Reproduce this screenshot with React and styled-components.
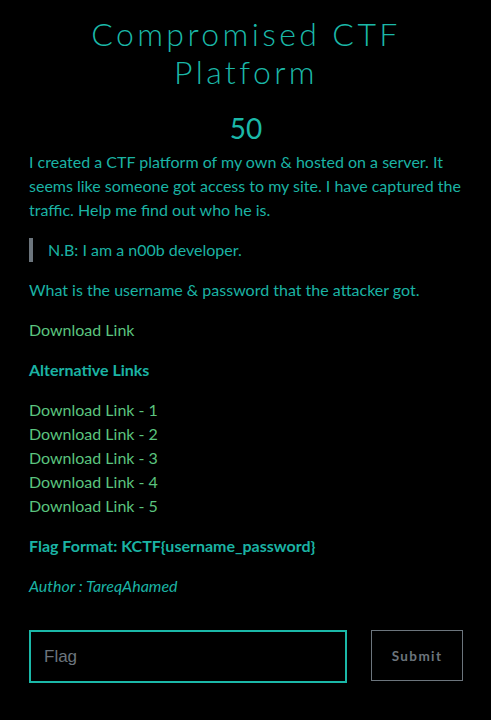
import React from "react";
import styled, { createGlobalStyle } from "styled-components";

const Global = createGlobalStyle`
  html, body { margin: 0; padding: 0; background: #000; }
  body { font-family: Lato, "Open Sans", sans-serif; }
  * { box-sizing: border-box; }
`;

const Page = styled.div`
  background: #000;
  min-height: 720px;
  padding: 15px 28px 20px 29px;
  display: flex;
  flex-direction: column;
`;

const Title = styled.h1`
  margin: 0 auto;
  max-width: 400px;
  text-align: center;
  font-family: Lato, sans-serif;
  font-weight: 300;
  font-size: 32px;
  line-height: 38px;
  letter-spacing: 3.4px;
  color: #1bb8a8;
`;

const Points = styled.h2`
  margin: 20px 0 5px;
  text-align: center;
  font-family: Lato, sans-serif;
  font-weight: 400;
  font-size: 28px;
  line-height: 34px;
  color: #1bb8a8;
`;

const Para = styled.p`
  margin: 0 0 16px;
  font-family: Lato, sans-serif;
  font-size: 16px;
  line-height: 24px;
  color: ${(p) => (p.$green ? "#5bc47e" : "#1bb3a4")};
  font-weight: ${(p) => (p.$bold ? 700 : 400)};
  font-style: ${(p) => (p.$italic ? "italic" : "normal")};
`;

const Quote = styled.blockquote`
  margin: 0 0 16px;
  padding-left: 15px;
  border-left: 4px solid #6c757d;
  font-family: Lato, sans-serif;
  font-size: 16px;
  line-height: 24px;
  color: #1bb3a4;
`;

const LinkList = styled.div`
  display: flex;
  flex-direction: column;
  margin-bottom: 16px;
`;

const DLink = styled.a`
  font-family: Lato, sans-serif;
  font-size: 16px;
  line-height: 24px;
  color: #5bc47e;
  text-decoration: none;
`;

const FormRow = styled.form`
  margin-top: 16px;
  display: flex;
  align-items: flex-start;
  gap: 24px;
`;

const FlagInput = styled.input`
  flex: 1;
  min-width: 0;
  height: 53px;
  background: #000;
  border: 2px solid #1bb8a8;
  padding: 0 13px;
  font-family: "Liberation Sans", Arial, sans-serif;
  font-size: 17px;
  color: #ddd;
  outline: none;
  &::placeholder { color: #6c757d; }
`;

const SubmitBtn = styled.button`
  width: 92px;
  height: 51px;
  background: #000;
  border: 1px solid #6c757d;
  color: #6c757d;
  font-family: Lato, sans-serif;
  font-weight: 700;
  font-size: 13.5px;
  letter-spacing: 1.4px;
  cursor: pointer;
`;

export default function App() {
  return (
    <>
      <Global />
      <Page>
        <Title>Compromised CTF Platform</Title>
        <Points>50</Points>
        <Para>
          I created a CTF platform of my own &amp; hosted on a server. It seems like
          someone got access to my site. I have captured the traffic. Help me find out
          who he is.
        </Para>
        <Quote>N.B: I am a n00b developer.</Quote>
        <Para>What is the username &amp; password that the attacker got.</Para>
        <Para $green>Download Link</Para>
        <Para $bold>Alternative Links</Para>
        <LinkList>
          {[1, 2, 3, 4, 5].map((n) => (
            <DLink key={n} href="#">Download Link - {n}</DLink>
          ))}
        </LinkList>
        <Para $bold>Flag Format: KCTF{"{"}username_password{"}"}</Para>
        <Para $italic>Author : TareqAhamed</Para>
        <FormRow onSubmit={(e) => e.preventDefault()}>
          <FlagInput placeholder="Flag" />
          <SubmitBtn type="submit">Submit</SubmitBtn>
        </FormRow>
      </Page>
    </>
  );
}
